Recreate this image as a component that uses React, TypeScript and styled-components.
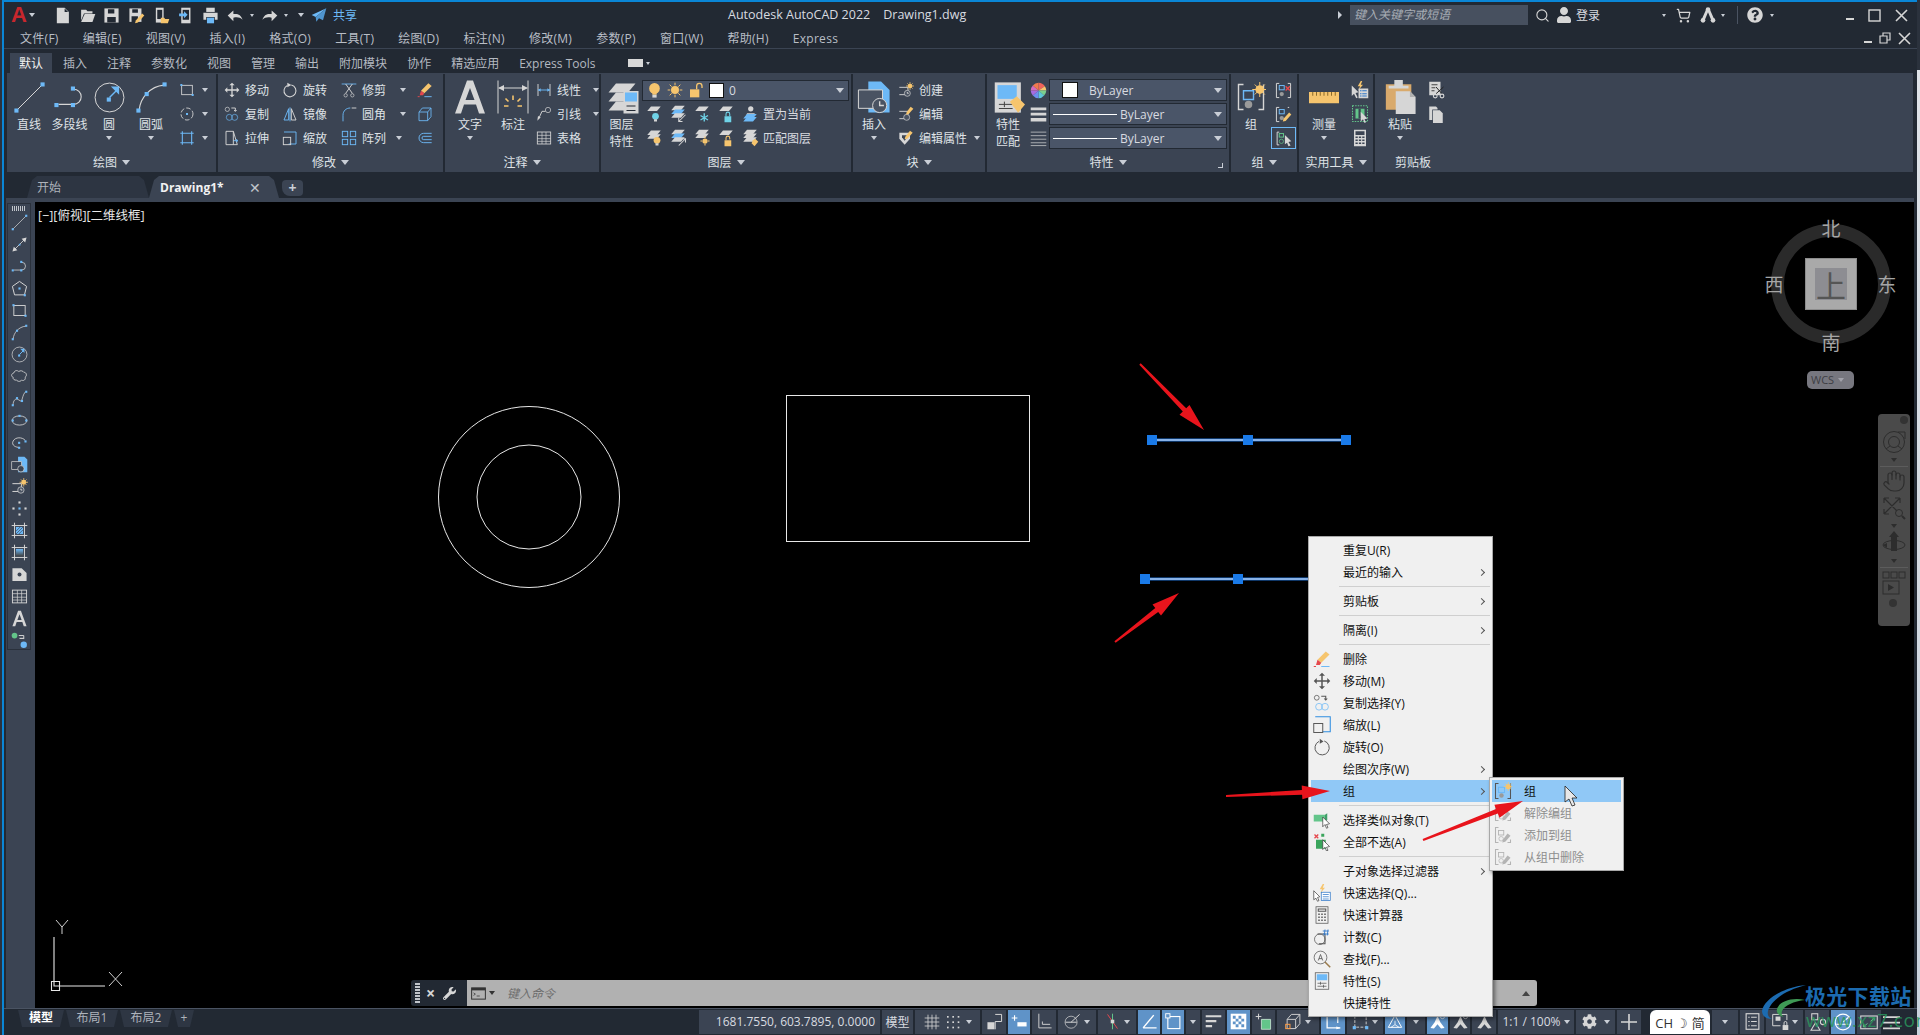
import React from 'react';
import styled, { createGlobalStyle } from 'styled-components';
import { FaCog, FaWrench, FaUser, FaQuestionCircle } from 'react-icons/fa';
import { Hand, Search, ShoppingCart } from 'lucide-react';

const FONT = `"Open Sans", "Noto Sans CJK SC", sans-serif`;
const DARK = '#222933';
const PANEL = '#3b4453';
const L = 'currentColor';
const B = '#6db9f7';
const Y = '#f6c56e';
const R = '#e5484d';
const GR = '#63c58a';

const P = ({ d, c = L, w = 1.4, f = 'none' }: { d: string; c?: string; w?: number; f?: string }) => (
  <path d={d} fill={f} stroke={c} strokeWidth={w} />
);
const F = ({ d, c = L }: { d: string; c?: string }) => <path d={d} fill={c} />;
const Q = ({ x, y, s = 3, c = B }: { x: number; y: number; s?: number; c?: string }) => (
  <rect x={x} y={y} width={s} height={s} fill={c} />
);
const Layer = ({ y = 0, c = L }: { y?: number; c?: string }) => <F c={c} d={`M8 ${3 + y}h13l-5 6H3z`} />;

const G: Record<string, React.ReactNode> = {
  new: <F d="M4 1h11l6 6v16H4zM15 2v5h5" />,
  open: <><F d="M3 4h7l2 2h7v3H7l-4 10z" /><F d="M8 10h15l-4 11H3z" /></>,
  save: <><F d="M2 2h20v20H2z" /><F c="#222933" d="M7 3h9v6H7zM6 14h12v8H6z" /></>,
  saveas: <><F d="M2 2h17v19H2z" /><F c="#222933" d="M6 3h8v5H6zM5 13h9v8H5z" /><F c={Y} d="M20 9l3 3-9 10-4 1 1-4z" /></>,
  phoneOpen: <><F d="M4 1h11v21H4z" /><F c="#222933" d="M6 4h7v13H6z" /><F c={Y} d="M11 15h5l1 2h6l-2 6H11z" /></>,
  phoneSave: <><F d="M6 1h13v22H6z" /><F c="#222933" d="M8 4h9v14H8z" /><F c={B} d="M3 9h7V6l5 5-5 5v-3H3z" /></>,
  print: <><F d="M6 1h12v6H6z" /><F d="M2 8h20v10h-4v-4H6v4H2z" /><F c={B} d="M7 15h10v8H7z" /></>,
  undo: <F d="M9 5v5c6-1 11 1 13 8-4-4-8-4-13-3v5L1 12z" />,
  redo: <F d="M15 5v5c-6-1-11 1-13 8 4-4 8-4 13-3v5l8-8z" />,
  share: <><F c={B} d="M23 2L1 12l6 3z" /><F c="#4f95cf" d="M23 2L7 15l1 7 4-5 6 3z" /></>,
  adsk: <><F d="M10 2h4l8 18h-5l-5-12-5 12H2z" /><circle cx="4.500" cy="20" r="3.500" fill={L} /><circle cx="19.500" cy="20" r="3.500" fill={L} /><circle cx="12" cy="4" r="3.500" fill={L} /></>,
  line: <><P d="M3 21L21 3" w={1} /><Q x={1} y={20} /><Q x={20} y={1} /></>,
  xline: <><P d="M3 21L21 3" w={1.2} /><F d="M2 22l2-7 5 5zM22 2l-2 7-5-5z" /><Q x={11} y={11} s={2.4} /></>,
  polyline: <><P d="M4 17H15M15 6a5.5 5.5 0 0 1 0 11" w={1.1} /><Q x={1} y={16} /><Q x={13} y={16} /><Q x={13} y={4} /></>,
  circle: <><circle cx="12" cy="12" r="10.5" fill="none" stroke={L} strokeWidth="1" /><Q x={10} y={12} /><P d="M12 12L18 6" c={B} /><F c={B} d="M19 4v6l-6-6z" /></>,
  arc: <><P d="M3 21C4 12 11 4 21 3" w={1.1} /><Q x={1} y={20} /><Q x={20} y={1} /><Q x={7} y={8} /></>,
  rect: <><rect x="4" y="5" width="16" height="14" fill="none" stroke={L} strokeWidth="1.3" /><Q x={2} y={3} /><Q x={19} y={18} /></>,
  ellipseDot: <><circle cx="12" cy="12" r="9" fill="none" stroke={L} strokeWidth="1.3" strokeDasharray="7 3" /><Q x={10.5} y={10.5} /></>,
  hatchBox: <P d="M2 5H22M2 19H22M5 2V22M19 2V22" c={B} w={1.6} />,
  move: <F d="M12 1l4 4h-3v6h6V8l4 4-4 4v-3h-6v6h3l-4 4-4-4h3v-6H5v3l-4-4 4-4v3h6V5H8z" />,
  rotate: <><P d="M14 4.5a9 9 0 1 1-6 .7" w={1.6} /><F d="M8 1l6 3.5-6 3.5z" /></>,
  trim: <><P d="M1 3H23" c={B} w={1.3} /><P d="M7 3l10 14M17 3L7 17" /><circle cx="7" cy="20" r="2.5" fill="none" stroke={L} /><circle cx="17" cy="20" r="2.5" fill="none" stroke={L} /></>,
  erase: <><F c={Y} d="M17 2l5 4-11 11-5-4z" /><F c={R} d="M6 13l5 4-2 3H4z" /><P d="M1 22h3" c={R} /><P d="M11 22h11" c={B} /></>,
  copy: <><circle cx="5" cy="5" r="3.2" fill="none" stroke={L} /><P d="M11 3h6v5M15 6l2 2 2-2" /><circle cx="8" cy="17" r="4.5" fill="none" stroke={B} /><circle cx="16" cy="17" r="4.5" fill="none" stroke={B} /></>,
  mirror: <><P d="M10 4L3 21h7zM12 2v21" c={B} /><P d="M14 4l7 17h-7z" /></>,
  fillet: <><P d="M3 23V14C3 7 8 3 14 3" c={B} w={1.4} /><P d="M16 3h7" /></>,
  cube: <P d="M3 9h13v13H3zM3 9l5-6h13v13l-5 6M16 9l5-6" c={B} w={1.3} />,
  stretch: <><P d="M3 2h11l6 20H3z" /><P d="M14 16h6M18 14l3 2-3 2" c={B} /><P d="M14 2v20" /></>,
  scale: <><P d="M3 3h18v18H10" c={B} /><rect x="2" y="11" width="11" height="11" fill="none" stroke={L} strokeWidth="1.4" /></>,
  array: <><rect x="2" y="2" width="8" height="8" fill="none" stroke={B} strokeWidth="1.4" /><rect x="14" y="2" width="8" height="8" fill="none" stroke={B} strokeWidth="1.4" /><rect x="2" y="14" width="8" height="8" fill="none" stroke={B} strokeWidth="1.4" /><rect x="14" y="14" width="8" height="8" fill="none" stroke={B} strokeWidth="1.4" /></>,
  offset: <><P d="M22 5H10a7 7 0 0 0 0 14h12" c={B} /><P d="M22 9.500H10a2.500 2.500 0 0 0 0 5h12" c={B} /></>,
  textA: <F d="M10 1h4l8 22h-4l-2-6H8l-2 6H2zM12 6l-3 8h6z" />,
  dim: <><P d="M2 1V23M22 1V23M3 6H21" w={1} /><F d="M2 6l4-2v4zM22 6l-4-2v4z" /><P d="M12 11v3M7 13l2 2M17 13l-2 2M6 18h3M15 18h3" c={Y} w={1.6} /></>,
  linear: <><P d="M3 3V21M21 3V21" /><P d="M3 12H21" c={B} /><F c={B} d="M3 12l4-2.500v5zM21 12l-4-2.500v5z" /></>,
  leader: <><circle cx="18" cy="6" r="4" fill="none" stroke={L} /><P d="M14 8H9L4 19" /><F d="M2 22l1-7 4 2z" /></>,
  table: <><rect x="2" y="3" width="20" height="18" fill="none" stroke={L} strokeWidth="1.3" /><P d="M2 8H22M2 13H22M2 17H22M9 3V21M15 3V21" w={1} /></>,
  layerProps: <><Layer /><Layer y={6} /><Layer y={12} /><F d="M13 8h10v15H13z" /><F c={B} d="M14 9h8v6h-8z" /><P d="M15 18h6M15 21h6" c="#222933" w={1} /></>,
  bulb: <><circle cx="12" cy="9" r="7.500" fill={Y} /><F c={Y} d="M9 15h6v3H9z" /><F d="M9 18h6v4H9z" /></>,
  sun: <><circle cx="12" cy="12" r="6" fill={Y} /><P d="M12 1v4M12 19v4M1 12h4M19 12h4M4 4l3 3M17 17l3 3M4 20l3-3M17 7l3-3" c={Y} w={1.5} /></>,
  lock: <><F c={Y} d="M3 11h14v12H3z" /><P d="M13 11V6a4 4 0 0 1 8 0v3" c={Y} w={2} /></>,
  layOff: <><Layer y={-1} /><circle cx="14" cy="15" r="4.500" fill="#6fd3e8" /><F d="M12 19h4v3h-4z" /></>,
  layWalk: <><Layer y={-2} /><Layer y={3} c={B} /><Layer y={8} /><P d="M22 13L13 22M13 17v5h5" /></>,
  layFrz: <><Layer y={-1} /><P d="M15 11v11M10 14l10 6M20 14l-10 6" c="#6fd3e8" w={1.8} /></>,
  layLock: <><Layer y={-1} /><F c="#6fd3e8" d="M10 15h9v8h-9z" /><P d="M12 15v-3a2.500 2.500 0 0 1 5 0v3" c="#6fd3e8" /></>,
  layCur: <><circle cx="13" cy="5" r="3.500" fill={L} /><F d="M8 11h10l1 3H7z" /><Layer y={9} c={B} /><Layer y={13} c={B} /></>,
  layBulb: <><Layer y={-1} /><Layer y={4} /><circle cx="16" cy="15" r="4.500" fill={Y} /><F d="M14 19h4v3h-4z" /></>,
  layUp: <><Layer y={-2} /><Layer y={3} c={B} /><Layer y={8} /><P d="M13 22L22 13M17 13h5v5" /></>,
  laySun: <><Layer y={-2} /><Layer y={3} /><circle cx="16" cy="16" r="3.500" fill={Y} /><P d="M16 10v2M16 20v2M10 16h2M20 16h2" c={Y} /></>,
  layLockY: <><Layer y={-1} /><F c={Y} d="M10 15h9v8h-9z" /><P d="M12 15v-3a2.500 2.500 0 0 1 5 0v2" c={Y} /></>,
  layMatch: <><Layer y={-2} /><Layer y={3} /><Layer y={8} /><F c={Y} d="M16 15l3-2 4 4-5 6-4-4z" /></>,
  insert: <><F c={B} d="M8 1h9l6 6v16H8z" /><rect x="1" y="7" width="17" height="13" fill="#4a5362" stroke={L} /><circle cx="16" cy="18" r="5" fill="#4a5362" stroke={L} /><P d="M16 15v3h3" /></>,
  create: <><P d="M2 8h13v11H2" /><circle cx="14" cy="17" r="4.500" fill="#4a5362" stroke={L} /><P d="M14 15v2h2" /><circle cx="18" cy="6" r="3.500" fill={Y} /><P d="M18 0v3M18 9v3M12 6h3M21 6h3M14 2l2 2M22 10l-2-2M14 10l2-2M22 2l-2 2" c={Y} w={1.1} /></>,
  blockEdit: <><P d="M2 8h13v11H2" /><circle cx="13" cy="17" r="4.500" fill="#4a5362" stroke={L} /><F c={Y} d="M19 1l4 3-7 8-4 1 1-4z" /></>,
  attr: <><F d="M2 4h16v9l-8 9-8-9z" /><F c="#3b4453" d="M6 8h8v3l-4 5-4-5z" /><F c={Y} d="M18 1l4 3-8 9-4 1 1-4z" /></>,
  match: <><F d="M2 1h19v22H2z" /><F c={B} d="M4 3h14v10H4z" /><P d="M5 17h10M5 20h10M9 15v4" c="#444" w={1} /><F c={Y} d="M13 15l5-4 6 6-5 6z" /></>,
  wheel: <><F c="#f0645a" d="M12 12V1a11 11 0 0 1 9 5z" /><F c="#f6c56e" d="M12 12l9-6a11 11 0 0 1 2 6z" /><F c="#7bd08f" d="M12 12h11a11 11 0 0 1-3 7z" /><F c="#5ec8d8" d="M12 12l8 7a11 11 0 0 1-8 4z" /><F c="#6d8ff0" d="M12 12v11a11 11 0 0 1-8-4z" /><F c="#a76de0" d="M12 12l-8 7a11 11 0 0 1-3-7z" /><F c="#d36dc0" d="M12 12H1a11 11 0 0 1 3-7z" /><F c="#f07a4f" d="M12 12L4 5a11 11 0 0 1 8-4z" /></>,
  lwt: <F d="M1 2h22v4H1zM1 9.500h22v4H1zM1 17h22v5H1z" />,
  ltype: <P d="M1 3h22M1 8h22M1 13h22M1 18h22M1 22h22" w={1} />,
  group: <><P d="M6 2H2v20h4M18 22h4V2" /><rect x="6" y="7" width="8" height="7" fill="none" stroke={B} strokeWidth="1.4" /><circle cx="10" cy="18" r="3" fill="#9a9a9a" /><circle cx="19" cy="6" r="3.500" fill={Y} /><P d="M19 0v3M19 9v3M13 6h3M22 6h2M15 2l2 2M23 10l-2-2M15 10l2-2M23 2l-2 2" c={Y} w={1} /></>,
  ungroup: <><P d="M6 2H2v20h4M18 2h4v20h-4" /><rect x="6" y="5" width="7" height="6" fill="none" stroke={B} strokeWidth="1.4" /><circle cx="9.500" cy="17" r="3" fill="#9a9a9a" /><P d="M15 6l6 6M21 6l-6 6" c={R} w={2} /></>,
  groupEdit: <><P d="M6 2H2v20h4M18 2h2" /><rect x="6" y="5" width="7" height="6" fill="none" stroke={B} strokeWidth="1.4" /><circle cx="9.500" cy="17" r="3" fill="#9a9a9a" /><F c={Y} d="M20 9l3 3-8 9-4 1 1-4z" /></>,
  groupSel: <><P d="M6 3H3v18h3" /><rect x="6" y="5" width="6" height="5" fill="none" stroke={GR} strokeWidth="1.4" /><circle cx="9" cy="16" r="3" fill="none" stroke={GR} /><F d="M14 7l9 9-4 1 3 5-3 1-2-5-3 2z" /></>,
  groupOff: <><P d="M6 2H2v20h4M18 22h4V18" /><rect x="6" y="6" width="7" height="6" fill="none" stroke={L} strokeWidth="1.2" /><circle cx="9.500" cy="17" r="3" fill="none" stroke={L} /><F d="M18 10l4 3-7 8-4 1 1-4z" /></>,
  ruler: <><F c={Y} d="M0 8h24v9H0z" /><P d="M3 8v3M6 8v3M9 8v3M12 8v3M15 8v3M18 8v3M21 8v3" c="#8a6a2a" w={1} /></>,
  quick: <><F c={Y} d="M13 0l-4 7h3l-2 5 6-7h-3l2-5z" /><F d="M1 6l9 9-4 1 3 6-2 1-3-6-3 3z" /><F d="M10 10h13v13H10z" /><P d="M12 13h2M15 13h6M12 17h2M15 17h6M12 20h2M15 20h6" c="#2f77c8" w={1.5} /></>,
  selAll: <><rect x="2" y="1" width="20" height="21" fill="none" stroke={GR} strokeDasharray="2 1.500" strokeWidth="1.4" /><F c={GR} d="M6 5h12v13H6z" /><F c="#3b4453" d="M10 5h3v10h6v3H10z" /><F d="M13 9l9 9-4 1 2 4-2 1-2-5-3 3z" /></>,
  calc: <><F d="M4 1h16v22H4z" /><F c="#3b4453" d="M6 3h12v5H6z" /><P d="M6 11h3M10.500 11h3M15 11h3M6 15h3M10.500 15h3M15 15h3M6 19h3M10.500 19h3M15 19h3" c="#3b4453" w={2} /></>,
  paste: <><F c="#d9aa6c" d="M2 3h18v18H2z" /><F d="M8 0h6v4h4v2H4V4h4z" /><F d="M9 8h10l4 4v12H9z" /><F c="#b0b0b0" d="M19 8v4h4z" /></>,
  cut: <><F d="M3 1h15v18H3z" /><P d="M6 5h8M6 9h5M6 13h4" c="#444" /><P d="M12 8l8 9M22 8l-10 9" c="#222" w={1.3} /><circle cx="11" cy="20" r="2.500" fill="none" stroke={L} strokeWidth="1.5" /><circle cx="20" cy="20" r="2.500" fill="none" stroke={L} strokeWidth="1.5" /></>,
  copyDoc: <><F d="M3 2h9l2 2v2H7v14H3z" /><F d="M8 7h9l4 4v13H8z" /></>,
  polygon: <><P d="M12 2l10 7-3 12H5L2 9z" /><Q x={10.500} y={10.500} /><Q x={18} y={20} /></>,
  cloud: <P d="M4 7c1-4 5-4 7-2 2-2 6-1 7 1 4 0 5 5 2 7 1 3-2 6-5 4-2 3-6 2-7 0-3 1-6-2-5-4-3-1-3-5 1-6z" w={1.2} />,
  spline: <><P d="M3 21c0-6 3-9 6-8s5 4 6 2 2-9 5-12" w={1.1} /><Q x={1} y={20} /><Q x={20} y={1} /><Q x={7} y={10} /><Q x={14} y={14} /></>,
  ellipse: <><ellipse cx="12" cy="12" rx="10.500" ry="6.500" fill="none" stroke={L} strokeWidth="1.2" /><Q x={10.500} y={4} /><Q x={1} y={10.500} /><Q x={20} y={10.500} /></>,
  ellipseArc: <><P d="M20 9C16 4 6 4 3 10s4 9 9 9" w={1.2} /><Q x={10} y={11} /><Q x={19} y={9} /><Q x={10} y={18} /></>,
  insertDoc: <><F c={B} d="M10 1h9l4 4v18H10z" /><rect x="1" y="8" width="14" height="11" fill="#3b4453" stroke={L} /><circle cx="14" cy="18" r="4.500" fill="#3b4453" stroke={L} /></>,
  point: <><Q x={10.500} y={2} c={L} /><Q x={2} y={10.500} c={L} /><Q x={19} y={10.500} c={L} /><Q x={10.500} y={19} c={L} /><Q x={10.500} y={10.500} c={B} /></>,
  hatch: <><P d="M1 5H23M1 19H23M5 1V23M19 1V23" /><F c={B} d="M7 7h10v10H7z" /><P d="M7 13l6-6M7 17l10-10M11 17l6-6" c="#3b4453" w={1} /></>,
  gradient: <><P d="M1 5H23M1 19H23M5 1V23M19 1V23" /><rect x="7" y="7" width="10" height="10" fill="url(#grad)" /><defs><linearGradient id="grad" x1="0" y1="0" x2="0" y2="1"><stop offset="0" stopColor={B} /><stop offset="1" stopColor="#444" /></linearGradient></defs></>,
  region: <><F d="M2 3h13l7 7v11H2z" /><circle cx="12" cy="12" r="2.800" fill="#3b4453" /></>,
  addSel: <><circle cx="5" cy="5" r="4" fill={GR} /><P d="M11 5h7v5" /><P d="M12 9h6" w={1.6} /><circle cx="18" cy="18" r="4.500" fill={B} /></>,
  simSel: <><F c={GR} d="M1 5h15v9H1z" /><F c="#3f9e68" d="M16 5l3-2v9l-3 2z" /><F c="#fff" d="M13 8l9 9-4 1 2 4-2 1-2-5-3 3z" /><P d="M13 8l9 9-4 1 2 4-2 1-2-5-3 3z" c="#333" w={.9} /></>,
  deselect: <><P d="M2 2l5 5M7 2l-5 5" c={R} w={1.8} /><F c="#3aa55c" d="M4 9h13v12H4z" /><Q x={11} y={1} s={4} c="#3aa55c" /><F c="#fff" d="M13 9l9 9-4 1 2 4-2 1-2-5-3 3z" /><P d="M13 9l9 9-4 1 2 4-2 1-2-5-3 3z" c="#333" w={.9} /></>,
  quickMenu: <><F c={Y} d="M13 0l-4 7h3l-2 5 6-7h-3l2-5z" /><F c="#fff" d="M1 9l8 8-3 1 2 4-2 1-2-4-3 2z" /><P d="M1 9l8 8-3 1 2 4-2 1-2-4-3 2z" c="#333" w={.9} /><rect x="11" y="11" width="12" height="11" fill="#fff" stroke="#2f77c8" /><P d="M13 14h8M13 17h8M13 20h8" c="#2f77c8" w={1} /></>,
  calcMenu: <><rect x="4" y="1" width="16" height="22" fill="none" stroke={L} /><P d="M7 4h10v3H7z" /><P d="M7 11h2M11 11h2M15 11h2M7 15h2M11 15h2M15 15h2M7 19h2M11 19h2M15 19h2" w={2} /></>,
  count: <><circle cx="9" cy="15" r="7" fill="none" stroke={L} /><P d="M6 8h10v13H8" /><P d="M16 2l-1 8M20 2l-1 8M13 4h8M13 8h8" c="#2f77c8" w={1.2} /></>,
  find: <><circle cx="10" cy="10" r="8.500" fill="none" stroke={L} /><P d="M7 14l3-8 3 8M8 11.500h4" w={1.1} /><P d="M16 16l7 7" c="#9a7a4a" w={2} /></>,
  propsMenu: <><rect x="3" y="1" width="18" height="22" fill="none" stroke={L} /><F c={B} d="M5 3h14v8H5z" /><P d="M6 15h12M6 19h12M10 13v4M14 17v4" w={1} /></>,
  scaleMenu: <><P d="M3 1h20v20H13" c="#2f8de0" /><rect x="1" y="10" width="12" height="12" fill="none" stroke={L} strokeWidth="1.3" /></>,
  rotateMenu: <><P d="M15 4a9.500 9.500 0 1 1-7 .5" w={1.3} /><F d="M9 1l5 3.500-5 3z" /></>,
  grid: <P d="M1 6H23M1 12H23M1 18H23M6 1V23M12 1V23M18 1V23" w={1.2} />,
  dots: <><Q x={3} y={3} s={2.500} c={L} /><Q x={11} y={3} s={2.500} c={L} /><Q x={19} y={3} s={2.500} c={L} /><Q x={3} y={11} s={2.500} c={L} /><Q x={11} y={11} s={2.500} c={L} /><Q x={19} y={11} s={2.500} c={L} /><Q x={3} y={19} s={2.500} c={L} /><Q x={11} y={19} s={2.500} c={L} /><Q x={19} y={19} s={2.500} c={L} /></>,
  snap: <><F d="M2 13h10v10H2z" /><P d="M13 2h9v10h-9v11" w={1.4} /></>,
  infer: <><P d="M1 7h8M5 3v8" c="#fff" w={1.6} /><F c="#fff" d="M9 13h13v6H9z" /></>,
  ortho: <P d="M4 1V21H22M9 12V16H20" w={1.3} />,
  polar: <><circle cx="10" cy="13" r="8.500" fill="none" stroke={L} /><P d="M10 13L22 2M2 13h16" /></>,
  osnap: <><P d="M5 2L19 22" c={R} w={1.4} /><P d="M12 1V23" c={GR} w={1.4} /><rect x="9.500" y="9.500" width="5" height="5" fill={L} /></>,
  angle: <P d="M3 21H22M3 21L18 3" c="#fff" w={2} />,
  rectIso: <><rect x="4" y="5" width="17" height="17" fill="none" stroke="#fff" strokeWidth="1.6" /><rect x="1" y="1" width="6" height="6" fill="#5f93c8" stroke="#fff" strokeWidth="1.3" /></>,
  lines: <F d="M1 3h22v3H1zM1 10h15v3H1zM1 17h9v3H1z" />,
  checker: <><F c="#fff" d="M1 1h22v22H1z" /><F c="#5f93c8" d="M4 4h4v4H4zM12 4h4v4h-4zM8 8h4v4H8zM16 8h4v4h-4zM4 12h4v4H4zM12 12h4v4h-4zM8 16h4v4H8zM16 16h4v4h-4z" /></>,
  selCycle: <><P d="M1 5h8M5 1v8" w={1.4} /><F c={GR} d="M9 9h13v14H9z" /><P d="M9 9h13v14H9z" c="#dff5e6" w={1} /></>,
  cube3d: <><P d="M3 9h12v13H3zM3 9l6-7h12v13l-6 7M15 9l6-7" w={1.3} /><rect x="1" y="16" width="6" height="6" fill="none" stroke="#f39a4a" strokeWidth="1.5" /></>,
  moveSt: <><P d="M3 2v19h18" c="#fff" w={1.8} /><P d="M8 4h10v10" c="#fff" w={1.8} /><F c="#fff" d="M16 19l7 2-7 2z" /></>,
  gizmo: <><rect x="4" y="4" width="16" height="16" fill="none" stroke={L} strokeDasharray="4 2" strokeWidth="1.3" /><Q x={1} y={1} s={4.500} /><Q x={18.500} y={1} s={4.500} /><Q x={1} y={18.500} s={4.500} /><Q x={18.500} y={18.500} s={4.500} /></>,
  gizmo3d: <><P d="M12 2L22 20H2z" c="#fff" w={1.5} /><P d="M12 10v6M6 20l6-4 6 4" c="#fff" w={1.2} /></>,
  annot: <><F d="M12 4l4 9 6 8-5 1-5-6-5 6-5-1 6-8z" /><circle cx="19" cy="5" r="3" fill="none" stroke={L} /></>,
  annotPlain: <F d="M12 4l4 9 6 8-5 1-5-6-5 6-5-1 6-8z" />,
  list: <><rect x="3" y="1" width="18" height="22" fill="none" stroke={L} strokeWidth="1.6" /><P d="M6 6h2M10 6h8M6 12h2M10 12h8M6 18h2M10 18h8" w={1.6} /></>,
  winLock: <><P d="M1 2h20v8" /><P d="M1 2v16h11" /><F d="M5 5h7v6H5z" /><F d="M15 17h8v7h-8z" /><P d="M17 17v-3a2 2 0 0 1 4 0v3" /></>,
  iso: <><rect x="5" y="1" width="8" height="8" fill="none" stroke={L} strokeWidth="1.4" /><circle cx="20" cy="12" r="3.500" fill="none" stroke={L} strokeWidth="1.4" /><P d="M10 13l6 10H4z" /></>,
  speed: <><circle cx="12" cy="12" r="10.500" fill="none" stroke="#fff" strokeWidth="1.6" /><P d="M12 12L19 6M3 15h18" c="#fff" w={1.4} /></>,
  full: <><rect x="1" y="4" width="22" height="17" fill="none" stroke={L} strokeWidth="1.5" /><P d="M14 11l5-4M16 6.500h3.500v3.500M10 14l-5 4M8 18.500H4.500V15" w={1.3} c={GR} /></>,
  burger: <F d="M0 3h24v2.500H0zM0 11h24v2.500H0zM0 19h24v2.500H0z" />,
  term: <><rect x="1" y="3" width="22" height="18" fill="none" stroke={L} strokeWidth="1.6" /><F d="M1 3h22v4H1z" /><P d="M4 11l3 2-3 2M9 16h5" w={1.2} /></>,
  navWheel: <><circle cx="12" cy="12" r="10.500" fill="none" stroke={L} strokeWidth="1" /><circle cx="12" cy="12" r="5.500" fill="none" stroke={L} strokeWidth="1" /><P d="M4 19l4-3M20 19l-4-3M16 2h7v7" w={1} /></>,
  navZoom: <><P d="M2 2l13 13M18 2L2 18M2 2v5M2 2h5M18 2v5M18 2h-5M2 18v-5M2 18h5" w={1.2} /><circle cx="17" cy="17" r="3.500" fill="none" stroke={L} /><P d="M20 20l3 3" w={2} /></>,
  navOrbit: <><F d="M9 6h6v14H9z" /><F d="M12 0l5 6H7z" /><ellipse cx="12" cy="14" rx="11" ry="4.500" fill="none" stroke={L} /><F d="M1 14l4-2v5z" /></>,
  navShow: <><rect x="1" y="1" width="6" height="6" fill="none" stroke={L} /><rect x="9" y="1" width="6" height="6" fill="none" stroke={L} /><rect x="17" y="1" width="6" height="6" fill="none" stroke={L} /><rect x="1" y="10" width="16" height="13" fill="none" stroke={L} /><F d="M6 13l6 3.500-6 3.500z" /></>,
};

const GlobalStyle = createGlobalStyle`
  html, body { margin: 0; padding: 0; overflow: hidden; background: #2b323d; }
  * { box-sizing: border-box; }
`;

const IcoSvg = styled.svg<{ $c?: string }>`
  display: block;
  flex: none;
  color: ${(p) => p.$c ?? '#d6d6d6'};
`;

const Ico = ({ n, s = 18, c }: { n: string; s?: number; c?: string }) => (
  <IcoSvg viewBox="0 0 24 24" width={s} height={s} $c={c}>
    {G[n]}
  </IcoSvg>
);

const Root = styled.div`
  position: relative;
  width: 1920px;
  height: 1035px;
  overflow: hidden;
  padding-left: 2px;
  background: #2b323d;
  font-family: ${FONT};
  font-size: 12px;
  color: #dfe2e6;
`;

const Win = styled.div`
  width: 1915px;
  height: 1035px;
  display: flex;
  flex-direction: column;
  background: ${DARK};
  border-top: 2px solid #0a86d6;
  border-left: 2px solid #0a86d6;
`;

const TitleBar = styled.div`
  height: 28px;
  flex: none;
  display: flex;
  align-items: center;
  position: relative;
  padding-bottom: 2px;
`;

const TitleLeft = styled.div`
  width: 724px;
  flex: none;
  display: flex;
  align-items: center;
  padding-left: 7px;
`;

const Logo = styled.span`
  font: 700 22px "Liberation Sans", sans-serif;
  color: #c8272d;
  width: 18px;
  line-height: 22px;
`;

const Qat = styled.div`
  display: flex;
  align-items: center;
  gap: 7.700px;
  margin-left: 19px;
`;

const Caret = styled.i<{ $ml?: number; $c?: string; $s?: number }>`
  display: inline-block;
  flex: none;
  width: 0;
  height: 0;
  margin-left: ${(p) => p.$ml ?? 0}px;
  border-left: ${(p) => p.$s ?? 3}px solid transparent;
  border-right: ${(p) => p.$s ?? 3}px solid transparent;
  border-top: ${(p) => (p.$s ?? 3) + 1}px solid ${(p) => p.$c ?? '#c9ced6'};
`;

const ShareText = styled.span`
  color: ${B};
  margin-left: -2px;
`;

const WinTitle = styled.span`
  color: #d8dbe0;
  font-size: 12.500px;
  white-space: pre;
  margin-top: -1px;
`;

const TitleRight = styled.div`
  position: absolute;
  left: 1334px;
  top: -1px;
  height: 28px;
  width: 580px;
  display: flex;
  align-items: center;
`;

const SideArrow = styled.i`
  width: 0;
  height: 0;
  border-top: 4px solid transparent;
  border-bottom: 4px solid transparent;
  border-left: 4px solid #c9ced6;
  margin-right: 8px;
`;

const SearchBox = styled.div`
  width: 178px;
  height: 20px;
  background: #47505f;
  color: #a8adb5;
  font-style: italic;
  padding-left: 4px;
  line-height: 20px;
  font-size: 12px;
`;

const Divider = styled.span`
  width: 1px;
  height: 18px;
  background: #4a5362;
  margin: 0 9px 0 12px;
`;

const WinBtns = styled.div<{ $ml?: number; $gap: number }>`
  margin-left: ${(p) => p.$ml ?? 0}px;
  display: flex;
  align-items: center;
  gap: ${(p) => p.$gap}px;
  flex: none;
`;

const WinMin = styled.span`
  width: 8px;
  height: 2px;
  background: #d6d6d6;
  margin-top: 8px;
`;

const MenuBar = styled.div`
  height: 19px;
  flex: none;
  display: flex;
  align-items: center;
  gap: 24px;
  padding: 0 0 2px 16px;
  color: #b9bec6;
  letter-spacing: 0.280px;
  border-bottom: 1px solid ${PANEL};
`;

const MenuRight = styled.div`
  margin-left: auto;
  padding-right: 6px;
`;

const RibbonTabs = styled.div`
  height: 24px;
  flex: none;
  display: flex;
  align-items: flex-end;
  gap: 2px;
  padding-left: 6px;
`;

const RTab = styled.div<{ $on?: boolean }>`
  height: 20px;
  line-height: 22px;
  padding: 0 9px;
  color: ${(p) => (p.$on ? '#f2f2f2' : '#b4b9c1')};
  background: ${(p) => (p.$on ? PANEL : 'transparent')};
`;

const TabWidget = styled.div`
  display: flex;
  align-items: center;
  height: 20px;
  margin-left: 22px;
  gap: 3px;
`;

const TabWidgetBox = styled.span`
  width: 15px;
  height: 8px;
  background: #d8d8d8;
`;

const Ribbon = styled.div`
  height: 99px;
  flex: none;
  width: 1906px;
  margin-left: 3px;
  background: ${PANEL};
  display: flex;
`;

const Panel = styled.section<{ $w?: number }>`
  position: relative;
  width: ${(p) => (p.$w ? `${p.$w}px` : 'auto')};
  flex: ${(p) => (p.$w ? 'none' : '1')};
  display: flex;
  flex-direction: column;
  border-right: ${(p) => (p.$w ? `2px solid ${DARK}` : 'none')};
  margin-top: 1px;
`;

const PanelBody = styled.div`
  height: 78px;
  padding-top: 4px;
  display: flex;
  align-items: flex-start;
`;

const PanelTitle = styled.div<{ $w?: number }>`
  height: 20px;
  width: ${(p) => (p.$w ? `${p.$w}px` : 'auto')};
  display: flex;
  align-items: center;
  justify-content: center;
  gap: 5px;
  color: #dfe2e6;
`;

const CornerArrow = styled.span`
  position: absolute;
  right: 6px;
  bottom: 4px;
  width: 5px;
  height: 5px;
  border-right: 1px solid #c9ced6;
  border-bottom: 1px solid #c9ced6;
`;

const BigTool = styled.div<{ $w: number }>`
  width: ${(p) => p.$w}px;
  flex: none;
  display: flex;
  flex-direction: column;
  align-items: center;
`;

const BigIcon = styled.div`
  height: 38px;
  display: flex;
  align-items: center;
  justify-content: center;

  svg * {
    vector-effect: non-scaling-stroke;
  }
`;

const BigLabel = styled.div`
  line-height: 17px;
  text-align: center;
  white-space: pre-line;
`;

const BigCaret = styled(Caret)`
  margin-top: 3px;
`;

const Big = ({ w, n, s = 32, label, caret }: { w: number; n: string; s?: number; label: string; caret?: boolean }) => (
  <BigTool $w={w}>
    <BigIcon>
      <Ico n={n} s={s} />
    </BigIcon>
    <BigLabel>{label}</BigLabel>
    {caret && <BigCaret />}
  </BigTool>
);

const Col = styled.div<{ $ml?: number; $w?: number }>`
  margin-left: ${(p) => p.$ml ?? 0}px;
  width: ${(p) => (p.$w ? `${p.$w}px` : 'auto')};
  flex: none;
  display: flex;
  flex-direction: column;
`;

const Row = styled.div<{ $gap?: number }>`
  height: 24px;
  display: flex;
  align-items: center;
  gap: ${(p) => p.$gap ?? 0}px;
  white-space: nowrap;
`;

const Slot = styled.span<{ $w: number; $box?: boolean }>`
  width: ${(p) => p.$w}px;
  height: 22px;
  flex: none;
  display: flex;
  align-items: center;
  justify-content: center;
  border: ${(p) => (p.$box ? `1px solid ${B}` : 'none')};
`;

const Tool = ({ n, label, w = 17, s = 16, gap = 5, caret }: { n: string; label?: string; w?: number; s?: number; gap?: number; caret?: number }) => (
  <Row $gap={gap}>
    <Slot $w={w}>
      <Ico n={n} s={s} />
    </Slot>
    {label && <span>{label}</span>}
    {caret !== undefined && <Caret $ml={caret} />}
  </Row>
);

const Combo = styled.div<{ $w: number; $h?: number }>`
  width: ${(p) => p.$w}px;
  height: ${(p) => p.$h ?? 22}px;
  background: #4a5568;
  border: 1px solid ${DARK};
  display: flex;
  align-items: center;
  position: relative;
  padding-right: 4px;
`;

const ComboCaret = styled(Caret)`
  margin-left: auto;
`;

const Swatch = styled.span<{ $size: number; $ml: number }>`
  width: ${(p) => p.$size}px;
  height: ${(p) => p.$size}px;
  background: #fff;
  border: 1px solid #111;
  margin-left: ${(p) => p.$ml}px;
  flex: none;
`;

const LineSample = styled.span`
  width: 64px;
  height: 1px;
  background: #fff;
  margin: 0 3px 0 3px;
  flex: none;
`;

const ComboText = styled.span<{ $ml?: number }>`
  margin-left: ${(p) => p.$ml ?? 0}px;
  color: #d8dbe0;
`;

const DocTabs = styled.div`
  height: 26px;
  flex: none;
  display: flex;
  align-items: flex-end;
  padding-left: 23px;
`;

const DocTab = styled.div<{ $w: number; $on?: boolean }>`
  width: ${(p) => p.$w}px;
  height: 22px;
  display: flex;
  align-items: center;
  padding-left: ${(p) => (p.$on ? 11 : 10)}px;
  background: ${(p) => (p.$on ? PANEL : '#2d3542')};
  clip-path: polygon(0 100%, 5px 4px, 10px 0, calc(100% - 10px) 0, calc(100% - 5px) 4px, 100% 100%);
  color: ${(p) => (p.$on ? '#f2f2f2' : '#aeb3bb')};
  font-weight: ${(p) => (p.$on ? 700 : 400)};
`;

const DocClose = styled.span`
  margin-left: 25px;
  font-weight: 400;
  font-size: 14px;
  color: #c0c4cb;
`;

const DocPlus = styled.div`
  width: 21px;
  height: 16px;
  margin: 0 0 2px 3px;
  background: ${PANEL};
  border-radius: 4px 4px 4px 8px;
  color: #c9ced6;
  font-size: 14px;
  font-weight: 700;
  line-height: 16px;
  text-align: center;
`;

const Strip = styled.div`
  height: 4px;
  flex: none;
  background: ${PANEL};
  margin-left: 2px;
  margin-right: 3px;
`;

const Main = styled.div`
  flex: 1;
  min-height: 0;
  display: flex;
`;

const Rail = styled.div`
  width: 31px;
  flex: none;
  background: ${PANEL};
  border-left: 2px solid ${DARK};
  padding: 1px 0 0 1px;
`;

const RailBox = styled.div`
  width: 24px;
  height: 447px;
  border: 1px solid #2a313c;
  display: flex;
  flex-direction: column;
  align-items: center;
`;

const GripH = styled.span`
  width: 14px;
  height: 5px;
  margin: 2px 0 0;
  flex: none;
  background: repeating-linear-gradient(90deg, #c0c4ca 0 1px, transparent 1px 2px);
`;

const RailBtn = styled.span`
  height: 22px;
  width: 22px;
  flex: none;
  display: flex;
  align-items: center;
  justify-content: center;
`;

const Canvas = styled.div`
  flex: 1;
  background: #000;
  position: relative;
`;

const DrawSvg = styled.svg`
  position: absolute;
  left: 0;
  top: 0;
`;

const ViewLabel = styled.div`
  position: absolute;
  left: 3px;
  top: 6px;
  color: #e8e8e8;
  font-size: 12.500px;
  line-height: 16px;
`;

const Ring = styled.div`
  position: absolute;
  left: 1736px;
  top: 22px;
  width: 120px;
  height: 120px;
  border-radius: 50%;
  border: 13px solid #2a2a2a;
`;

const CubeFace = styled.div`
  position: absolute;
  left: 1770px;
  top: 56px;
  width: 52px;
  height: 52px;
  background: #a9a9a9;
  border: 1px solid #8c8c8c;
  display: flex;
  align-items: center;
  justify-content: center;
`;

const CubeInner = styled.div`
  width: 32px;
  height: 32px;
  background: #8d8d92;
  color: #555;
  font: 400 30px/32px "Noto Sans CJK SC", sans-serif;
  text-align: center;
`;

const Compass = styled.span<{ $x: number; $y: number }>`
  position: absolute;
  left: ${(p) => p.$x - 10}px;
  top: ${(p) => p.$y - 12}px;
  width: 20px;
  font-size: 19px;
  line-height: 24px;
  text-align: center;
  color: #a6a6a6;
`;

const WcsPill = styled.div`
  position: absolute;
  left: 1772px;
  top: 169px;
  width: 47px;
  height: 18px;
  border-radius: 5px;
  background: #77777f;
  color: #3e3e44;
  font-size: 11px;
  line-height: 18px;
  display: flex;
  align-items: center;
  padding-left: 4px;
  gap: 4px;
`;

const NavBar = styled.div`
  position: absolute;
  left: 1843px;
  top: 212px;
  width: 32px;
  height: 212px;
  border-radius: 4px;
  background: #4a4a4a;
  display: flex;
  flex-direction: column;
  align-items: center;
  color: #2d2d2d;
  padding-top: 2px;
`;

const NavDot = styled.span`
  width: 8px;
  height: 8px;
  border-radius: 50%;
  background: #333;
  align-self: flex-end;
  margin-right: 2px;
  flex: none;
`;

const NavSlot = styled.span<{ $mt?: number }>`
  margin-top: ${(p) => p.$mt ?? 0}px;
  flex: none;
  display: flex;
`;

const NavRule = styled.span`
  width: 28px;
  height: 1px;
  background: #5c5c5c;
  margin-top: 4px;
  flex: none;
`;

const RightEdge = styled.div`
  width: 3px;
  flex: none;
  background: ${DARK};
`;

const CommandBar = styled.div`
  position: absolute;
  left: 376px;
  top: 778px;
  width: 1126px;
  height: 26px;
  display: flex;
`;

const CmdTools = styled.div`
  width: 56px;
  flex: none;
  background: ${DARK};
  display: flex;
  align-items: center;
  gap: 6px;
  padding-left: 4px;
  border-radius: 3px 0 0 3px;
`;

const GripV = styled.span`
  width: 5px;
  height: 20px;
  background: repeating-linear-gradient(180deg, #c0c4ca 0 2px, transparent 2px 3px);
`;

const CmdX = styled.span`
  color: #d6d6d6;
  font-size: 16px;
  font-weight: 700;
  width: 11px;
`;

const CmdField = styled.div`
  flex: 1;
  background: #b1b1b1;
  display: flex;
  align-items: center;
  padding: 0 4px;
  border-radius: 0 3px 3px 0;
  color: #6d6d6d;
  font-style: italic;
`;

const CmdText = styled.span`
  margin-left: 12px;
`;

const CmdUp = styled.i`
  margin-left: auto;
  margin-right: 3px;
  width: 0;
  height: 0;
  border-left: 4px solid transparent;
  border-right: 4px solid transparent;
  border-bottom: 5px solid #444;
`;

const StatusBar = styled.div`
  height: 27px;
  flex: none;
  display: flex;
  align-items: flex-start;
  gap: 2px;
  padding-top: 1px;
  border-top: 1px solid #4a5362;
`;

const LayoutTabs = styled.div`
  width: 693px;
  flex: none;
  display: flex;
  gap: 2px;
  padding-left: 14px;
`;

const LayoutTab = styled.div<{ $w: number; $on?: boolean }>`
  width: ${(p) => p.$w}px;
  height: 17px;
  line-height: 15px;
  text-align: center;
  background: #2e3643;
  clip-path: polygon(0 0, 100% 0, calc(100% - 4px) 100%, 4px 100%);
  color: ${(p) => (p.$on ? '#fff' : '#aeb3bb')};
  font-weight: ${(p) => (p.$on ? 700 : 400)};
`;

const StatusBox = styled.div<{ $w: number; $on?: boolean; $end?: boolean; $gap?: number; $ml?: number }>`
  width: ${(p) => p.$w}px;
  height: 24px;
  flex: none;
  margin-left: ${(p) => p.$ml ?? 0}px;
  display: flex;
  align-items: center;
  justify-content: ${(p) => (p.$end ? 'flex-end' : 'center')};
  gap: ${(p) => p.$gap ?? 3}px;
  padding: ${(p) => (p.$end ? '0 5px 1px 0' : '0 0 1px')};
  background: ${(p) => (p.$on ? '#5f93c8' : PANEL)};
  color: #d8dbe0;
`;

const ImeBox = styled.div`
  width: 60px;
  height: 24px;
  margin-left: 7px;
  flex: none;
  background: #fff;
  border-radius: 6px 6px 0 0;
  color: #333;
  font-size: 13px;
  line-height: 26px;
  text-align: center;
  white-space: nowrap;
`;

const BurgerWrap = styled.span`
  flex: none;
  height: 24px;
  display: flex;
  align-items: center;
`;

const MenuPanel = styled.div<{ $x: number; $y: number; $w: number }>`
  position: absolute;
  left: ${(p) => p.$x}px;
  top: ${(p) => p.$y}px;
  width: ${(p) => p.$w}px;
  background: #f0f0f0;
  border: 1px solid #a8a8a8;
  padding: 2px;
  color: #111;
  box-shadow: 2px 2px 4px rgba(0, 0, 0, 0.45);
`;

const MenuRow = styled.div<{ $hl?: boolean; $off?: boolean }>`
  height: 22px;
  display: flex;
  align-items: center;
  background: ${(p) => (p.$hl ? '#90c8f6' : 'transparent')};
  color: ${(p) => (p.$off ? '#8e8e8e' : '#111')};
  white-space: nowrap;
`;

const MenuIcon = styled.span`
  width: 32px;
  flex: none;
  padding-left: 2px;
  display: flex;
  align-items: center;
`;

const MenuChevron = styled.span`
  margin-left: auto;
  margin-right: 6px;
  width: 5px;
  height: 5px;
  border-top: 1px solid #555;
  border-right: 1px solid #555;
  transform: rotate(45deg);
`;

const MenuSep = styled.div`
  height: 7px;
  margin-left: 28px;
  display: flex;
  align-items: center;

  &::after {
    content: '';
    width: 100%;
    height: 1px;
    background: #cfcfcf;
  }
`;

const OverSvg = styled.svg`
  position: absolute;
  left: 0;
  top: 0;
  pointer-events: none;
`;

const Watermark = styled.div`
  position: absolute;
  left: 1805px;
  top: 984px;
  color: #1c6bb0;
  font-size: 21px;
  font-weight: 700;
  line-height: 25px;
  letter-spacing: 0.300px;
  white-space: nowrap;
`;

const WatermarkUrl = styled.div`
  position: absolute;
  left: 1806px;
  top: 1009px;
  color: rgba(42, 150, 92, 0.85);
  font-size: 19px;
  line-height: 22px;
  letter-spacing: 0.500px;
  white-space: nowrap;
`;

const EdgeSliver = styled.div`
  position: absolute;
  right: 0;
  top: 70px;
  width: 3px;
  height: 965px;
  background: linear-gradient(180deg, #dfe3e8, #c9d2dc);
`;

type MenuItem = { t?: string; i?: string; a?: boolean; hl?: boolean; sep?: boolean };

const MAIN_MENU: MenuItem[] = [
  { t: '重复U(R)' },
  { t: '最近的输入', a: true },
  { sep: true },
  { t: '剪贴板', a: true },
  { sep: true },
  { t: '隔离(I)', a: true },
  { sep: true },
  { t: '删除', i: 'erase' },
  { t: '移动(M)', i: 'move' },
  { t: '复制选择(Y)', i: 'copy' },
  { t: '缩放(L)', i: 'scaleMenu' },
  { t: '旋转(O)', i: 'rotateMenu' },
  { t: '绘图次序(W)', a: true },
  { t: '组', a: true, hl: true },
  { sep: true },
  { t: '选择类似对象(T)', i: 'simSel' },
  { t: '全部不选(A)', i: 'deselect' },
  { sep: true },
  { t: '子对象选择过滤器', a: true },
  { t: '快速选择(Q)...', i: 'quickMenu' },
  { t: '快速计算器', i: 'calcMenu' },
  { t: '计数(C)', i: 'count' },
  { t: '查找(F)...', i: 'find' },
  { t: '特性(S)', i: 'propsMenu' },
  { t: '快捷特性' },
];

const MENU_BAR = ['文件(F)', '编辑(E)', '视图(V)', '插入(I)', '格式(O)', '工具(T)', '绘图(D)', '标注(N)', '修改(M)', '参数(P)', '窗口(W)', '帮助(H)', 'Express'];
const RIBBON_TABS = ['默认', '插入', '注释', '参数化', '视图', '管理', '输出', '附加模块', '协作', '精选应用', 'Express Tools'];
const RAIL = ['line', 'xline', 'polyline', 'polygon', 'rect', 'arc', 'circle', 'cloud', 'spline', 'ellipse', 'ellipseArc', 'insertDoc', 'create', 'point', 'hatch', 'gradient', 'region', 'table', 'textA', 'addSel'];

// tail-thin red arrows drawn over the screenshot
const arrow = (x1: number, y1: number, x2: number, y2: number) => {
  const len = Math.hypot(x2 - x1, y2 - y1);
  const ux = (x2 - x1) / len;
  const uy = (y2 - y1) / len;
  const nx = -uy;
  const ny = ux;
  const hx = x2 - ux * 28;
  const hy = y2 - uy * 28;
  const pt = (x: number, y: number) => `${x.toFixed(1)},${y.toFixed(1)}`;
  return [
    pt(x1 + nx, y1 + ny),
    pt(hx + nx * 2.4, hy + ny * 2.4),
    pt(hx + nx * 7, hy + ny * 7),
    pt(x2, y2),
    pt(hx - nx * 7, hy - ny * 7),
    pt(hx - nx * 2.4, hy - ny * 2.4),
    pt(x1 - nx, y1 - ny),
  ].join(' ');
};

const Grip = ({ x, y }: { x: number; y: number }) => <rect x={x - 5} y={y - 5} width={10} height={10} fill="#1a7ae8" />;

const WinX = ({ s = 13 }: { s?: number }) => (
  <svg width={s} height={s} viewBox="0 0 13 13">
    <path d="M1 1l11 11M12 1L1 12" stroke="#d6d6d6" strokeWidth="1.6" />
  </svg>
);

const App = () => (
  <Root>
    <GlobalStyle />
    <Win>
      <TitleBar>
        <TitleLeft>
          <Logo>A</Logo>
          <Caret $ml={0} $s={3} />
          <Qat>
            <Ico n="new" s={17} />
            <Ico n="open" s={17} />
            <Ico n="save" s={17} />
            <Ico n="saveas" s={17} />
            <Ico n="phoneOpen" s={17} />
            <Ico n="phoneSave" s={17} />
            <Ico n="print" s={17} />
            <Ico n="undo" s={17} />
            <Caret $s={2} $ml={-2} />
            <Ico n="redo" s={17} />
            <Caret $s={2} $ml={-2} />
            <Caret $s={3} $ml={2} />
            <Ico n="share" s={16} />
            <ShareText>共享</ShareText>
          </Qat>
        </TitleLeft>
        <WinTitle>Autodesk AutoCAD 2022    Drawing1.dwg</WinTitle>
        <TitleRight>
          <SideArrow />
          <SearchBox>键入关键字或短语</SearchBox>
          <Slot $w={28}>
            <Search size={15} color="#d6d6d6" strokeWidth={1.8} />
          </Slot>
          <FaUser size={16} color="#d6d6d6" />
          <ComboText $ml={4}>登录</ComboText>
          <Caret $ml={62} $s={2} />
          <Slot $w={34}>
            <ShoppingCart size={15} color="#d6d6d6" />
          </Slot>
          <Ico n="adsk" s={16} />
          <Caret $ml={5} $s={2} />
          <Divider />
          <FaQuestionCircle size={16} color="#d6d6d6" />
          <Caret $ml={7} $s={2} />
          <WinBtns $ml={72} $gap={14}>
            <WinMin />
            <svg width="13" height="13" viewBox="0 0 13 13">
              <rect x="1" y="1" width="11" height="11" fill="none" stroke="#d6d6d6" strokeWidth="1.4" />
            </svg>
            <WinX />
          </WinBtns>
        </TitleRight>
      </TitleBar>

      <MenuBar>
        {MENU_BAR.map((m) => (
          <span key={m}>{m}</span>
        ))}
        <MenuRight>
          <WinBtns $gap={7}>
            <WinMin />
            <svg width="12" height="12" viewBox="0 0 12 12">
              <path d="M1 4h7v7H1zM4 4V1h7v7H8" fill="none" stroke="#d6d6d6" strokeWidth="1.2" />
            </svg>
            <WinX />
          </WinBtns>
        </MenuRight>
      </MenuBar>

      <RibbonTabs>
        {RIBBON_TABS.map((t, i) => (
          <RTab key={t} $on={i === 0}>
            {t}
          </RTab>
        ))}
        <TabWidget>
          <TabWidgetBox />
          <Caret $s={2} />
        </TabWidget>
      </RibbonTabs>

      <Ribbon>
        <Panel $w={211}>
          <PanelBody>
            <Big w={44} n="line" s={33} label="直线" />
            <Big w={37} n="polyline" s={33} label="多段线" />
            <Big w={42} n="circle" s={33} label="圆" caret />
            <Big w={42} n="arc" s={33} label="圆弧" caret />
            <Col $ml={3}>
              <Tool n="rect" w={24} gap={3} caret={0} />
              <Tool n="ellipseDot" w={24} gap={3} caret={0} />
              <Tool n="hatchBox" w={24} gap={3} caret={0} />
            </Col>
          </PanelBody>
          <PanelTitle>
            绘图 <Caret $s={4} />
          </PanelTitle>
        </Panel>

        <Panel $w={227}>
          <PanelBody>
            <Col $ml={5} $w={58}>
              <Tool n="move" label="移动" />
              <Tool n="copy" label="复制" />
              <Tool n="stretch" label="拉伸" />
            </Col>
            <Col $w={59}>
              <Tool n="rotate" label="旋转" />
              <Tool n="mirror" label="镜像" />
              <Tool n="scale" label="缩放" />
            </Col>
            <Col $w={76}>
              <Tool n="trim" label="修剪" caret={9} />
              <Tool n="fillet" label="圆角" caret={9} />
              <Tool n="array" label="阵列" caret={5} />
            </Col>
            <Col>
              <Tool n="erase" />
              <Tool n="cube" />
              <Tool n="offset" />
            </Col>
          </PanelBody>
          <PanelTitle>
            修改 <Caret $s={4} />
          </PanelTitle>
        </Panel>

        <Panel $w={156}>
          <PanelBody>
            <Big w={50} n="textA" s={36} label="文字" caret />
            <Big w={36} n="dim" s={36} label="标注" />
            <Col $ml={4}>
              <Tool n="linear" label="线性" caret={7} />
              <Tool n="leader" label="引线" caret={7} />
              <Tool n="table" label="表格" />
            </Col>
          </PanelBody>
          <PanelTitle>
            注释 <Caret $s={4} />
          </PanelTitle>
        </Panel>

        <Panel $w={252}>
          <PanelBody>
            <Big w={41} n="layerProps" s={36} label={'图层\n特性'} />
            <Col>
              <Row>
                <Combo $w={207} $h={21}>
                  <Slot $w={22}>
                    <Ico n="bulb" s={17} />
                  </Slot>
                  <Slot $w={20}>
                    <Ico n="sun" s={16} />
                  </Slot>
                  <Slot $w={22}>
                    <Ico n="lock" s={16} />
                  </Slot>
                  <Swatch $size={15} $ml={2} />
                  <ComboText $ml={5}>0</ComboText>
                  <ComboCaret $s={4} />
                </Combo>
              </Row>
              <Row>
                <Slot $w={24}><Ico n="layOff" s={18} /></Slot>
                <Slot $w={24}><Ico n="layWalk" s={18} /></Slot>
                <Slot $w={24}><Ico n="layFrz" s={18} /></Slot>
                <Slot $w={24}><Ico n="layLock" s={18} /></Slot>
                <Slot $w={24}><Ico n="layCur" s={18} /></Slot>
                <ComboText $ml={1}>置为当前</ComboText>
              </Row>
              <Row>
                <Slot $w={24}><Ico n="layBulb" s={18} /></Slot>
                <Slot $w={24}><Ico n="layUp" s={18} /></Slot>
                <Slot $w={24}><Ico n="laySun" s={18} /></Slot>
                <Slot $w={24}><Ico n="layLockY" s={18} /></Slot>
                <Slot $w={24}><Ico n="layMatch" s={18} /></Slot>
                <ComboText $ml={1}>匹配图层</ComboText>
              </Row>
            </Col>
          </PanelBody>
          <PanelTitle>
            图层 <Caret $s={4} />
          </PanelTitle>
        </Panel>

        <Panel $w={134}>
          <PanelBody>
            <Big w={42} n="insert" s={34} label="插入" caret />
            <Col>
              <Tool n="create" label="创建" w={22} gap={2} />
              <Tool n="blockEdit" label="编辑" w={22} gap={2} />
              <Tool n="attr" label="编辑属性" w={22} gap={2} caret={5} />
            </Col>
          </PanelBody>
          <PanelTitle>
            块 <Caret $s={4} />
          </PanelTitle>
        </Panel>

        <Panel $w={244}>
          <PanelBody>
            <Big w={42} n="match" s={33} label={'特性\n匹配'} />
            <Col>
              <Row $gap={2}>
                <Slot $w={18}><Ico n="wheel" s={17} /></Slot>
                <Combo $w={178}>
                  <Swatch $size={16} $ml={12} />
                  <ComboText $ml={11}>ByLayer</ComboText>
                  <ComboCaret $s={4} />
                </Combo>
              </Row>
              <Row $gap={2}>
                <Slot $w={18}><Ico n="lwt" s={17} /></Slot>
                <Combo $w={178}>
                  <LineSample />
                  <ComboText>ByLayer</ComboText>
                  <ComboCaret $s={4} />
                </Combo>
              </Row>
              <Row $gap={2}>
                <Slot $w={18}><Ico n="ltype" s={17} /></Slot>
                <Combo $w={178}>
                  <LineSample />
                  <ComboText>ByLayer</ComboText>
                  <ComboCaret $s={4} />
                </Combo>
              </Row>
            </Col>
          </PanelBody>
          <PanelTitle>
            特性 <Caret $s={4} />
          </PanelTitle>
          <CornerArrow />
        </Panel>

        <Panel $w={68}>
          <PanelBody>
            <Big w={40} n="group" s={30} label="组" />
            <Col>
              <Row><Slot $w={25}><Ico n="ungroup" s={17} /></Slot></Row>
              <Row><Slot $w={25}><Ico n="groupEdit" s={17} /></Slot></Row>
              <Row><Slot $w={25} $box><Ico n="groupSel" s={17} /></Slot></Row>
            </Col>
          </PanelBody>
          <PanelTitle>
            组 <Caret $s={4} />
          </PanelTitle>
        </Panel>

        <Panel $w={76}>
          <PanelBody>
            <Big w={50} n="ruler" s={30} label="测量" caret />
            <Col>
              <Row><Slot $w={22}><Ico n="quick" s={18} /></Slot></Row>
              <Row><Slot $w={22}><Ico n="selAll" s={18} /></Slot></Row>
              <Row><Slot $w={22}><Ico n="calc" s={18} /></Slot></Row>
            </Col>
          </PanelBody>
          <PanelTitle>
            实用工具 <Caret $s={4} />
          </PanelTitle>
        </Panel>

        <Panel>
          <PanelBody>
            <Big w={50} n="paste" s={34} label="粘贴" caret />
            <Col>
              <Row><Slot $w={22}><Ico n="cut" s={18} /></Slot></Row>
              <Row><Slot $w={22}><Ico n="copyDoc" s={18} /></Slot></Row>
            </Col>
          </PanelBody>
          <PanelTitle $w={76}>剪贴板</PanelTitle>
        </Panel>
      </Ribbon>

      <DocTabs>
        <DocTab $w={122}>开始</DocTab>
        <DocTab $w={130} $on>
          Drawing1*
          <DocClose>✕</DocClose>
        </DocTab>
        <DocPlus>+</DocPlus>
      </DocTabs>
      <Strip />

      <Main>
        <Rail>
          <RailBox>
            <GripH />
            {RAIL.map((n) => (
              <RailBtn key={n}>
                <Ico n={n} s={17} />
              </RailBtn>
            ))}
          </RailBox>
        </Rail>

        <Canvas>
          <DrawSvg width={1879} height={806} viewBox="35 202 1879 806">
            <g fill="none" stroke="#e8e8e8" strokeWidth="1">
              <circle cx="529" cy="497" r="90.500" />
              <circle cx="529" cy="497" r="52" />
              <rect x="786.500" y="395.500" width="243" height="146" />
              <path d="M54 937V986H105M51.500 981.500h8v9h-8z" strokeWidth="1.100" />
              <path d="M56 920l6 7 6-7M62 927v7M109 972l13 14M122 972l-13 14" strokeWidth=".9" />
            </g>
            <path d="M1152 440H1346M1145 579H1320" stroke="#1e6fd0" strokeWidth="3" />
            <path d="M1152 440H1346M1145 579H1320" stroke="#f2f6ff" strokeWidth="1" />
            <Grip x={1152} y={440} />
            <Grip x={1248} y={440} />
            <Grip x={1346} y={440} />
            <Grip x={1145} y={579} />
            <Grip x={1238} y={579} />
          </DrawSvg>

          <ViewLabel>[−][俯视][二维线框]</ViewLabel>

          <Ring />
          <CubeFace>
            <CubeInner>上</CubeInner>
          </CubeFace>
          <Compass $x={1796} $y={27}>北</Compass>
          <Compass $x={1796} $y={141}>南</Compass>
          <Compass $x={1739} $y={83}>西</Compass>
          <Compass $x={1852} $y={83}>东</Compass>
          <WcsPill>
            WCS <Caret $s={3} $c="#a2a2aa" />
          </WcsPill>

          <NavBar>
            <NavDot />
            <NavSlot $mt={6}><Ico n="navWheel" s={24} c="#2d2d2d" /></NavSlot>
            <NavSlot $mt={4}><Caret $c="#2d2d2d" /></NavSlot>
            <NavRule />
            <NavSlot $mt={2}><Hand size={24} color="#2d2d2d" strokeWidth={1.2} /></NavSlot>
            <NavSlot $mt={3}><Ico n="navZoom" s={24} c="#2d2d2d" /></NavSlot>
            <NavSlot $mt={4}><Caret $c="#2d2d2d" /></NavSlot>
            <NavSlot $mt={3}><Ico n="navOrbit" s={24} c="#2d2d2d" /></NavSlot>
            <NavSlot $mt={4}><Caret $c="#2d2d2d" /></NavSlot>
            <NavRule />
            <NavSlot $mt={3}><Ico n="navShow" s={24} c="#2d2d2d" /></NavSlot>
            <NavSlot $mt={4}><NavDot /></NavSlot>
          </NavBar>

          <CommandBar>
            <CmdTools>
              <GripV />
              <CmdX>×</CmdX>
              <FaWrench size={13} color="#d6d6d6" />
            </CmdTools>
            <CmdField>
              <Ico n="term" s={15} c="#333" />
              <Caret $ml={3} $c="#333" />
              <CmdText>键入命令</CmdText>
              <CmdUp />
            </CmdField>
          </CommandBar>
        </Canvas>
        <RightEdge />
      </Main>

      <StatusBar>
        <LayoutTabs>
          <LayoutTab $w={46} $on>模型</LayoutTab>
          <LayoutTab $w={52}>布局1</LayoutTab>
          <LayoutTab $w={52}>布局2</LayoutTab>
          <LayoutTab $w={20}>+</LayoutTab>
        </LayoutTabs>
        <StatusBox $w={181} $end>1681.7550, 603.7895, 0.0000</StatusBox>
        <StatusBox $w={31}>模型</StatusBox>
        <StatusBox $w={65} $gap={5}>
          <Ico n="grid" s={16} />
          <Ico n="dots" s={16} />
          <Caret />
        </StatusBox>
        <StatusBox $w={24}><Ico n="snap" s={17} /></StatusBox>
        <StatusBox $w={22} $on><Ico n="infer" s={17} c="#fff" /></StatusBox>
        <StatusBox $w={24}><Ico n="ortho" s={17} /></StatusBox>
        <StatusBox $w={38}><Ico n="polar" s={17} /><Caret /></StatusBox>
        <StatusBox $w={38}><Ico n="osnap" s={17} /><Caret /></StatusBox>
        <StatusBox $w={22} $on><Ico n="angle" s={17} /></StatusBox>
        <StatusBox $w={22} $on><Ico n="rectIso" s={17} /></StatusBox>
        <StatusBox $w={14}><Caret /></StatusBox>
        <StatusBox $w={23}><Ico n="lines" s={17} /></StatusBox>
        <StatusBox $w={23} $on><Ico n="checker" s={17} /></StatusBox>
        <StatusBox $w={23}><Ico n="selCycle" s={17} /></StatusBox>
        <StatusBox $w={42}><Ico n="cube3d" s={17} /><Caret /></StatusBox>
        <StatusBox $w={24} $on><Ico n="moveSt" s={17} /></StatusBox>
        <StatusBox $w={36}><Ico n="gizmo" s={17} /><Caret /></StatusBox>
        <StatusBox $w={20} $on><Ico n="gizmo3d" s={16} /></StatusBox>
        <StatusBox $w={18}><Caret /></StatusBox>
        <StatusBox $w={21} $on><Ico n="annot" s={17} c="#fff" /></StatusBox>
        <StatusBox $w={20}><Ico n="annot" s={17} /></StatusBox>
        <StatusBox $w={24}><Ico n="annotPlain" s={17} /></StatusBox>
        <StatusBox $w={76}>1:1 / 100%<Caret /></StatusBox>
        <StatusBox $w={39} $gap={7}><FaCog size={15} color="#d6d6d6" /><Caret /></StatusBox>
        <StatusBox $w={24}>
          <svg width="16" height="16" viewBox="0 0 16 16">
            <path d="M8 0v16M0 8h16" stroke="#d6d6d6" strokeWidth="1.600" />
          </svg>
        </StatusBox>
        <ImeBox>CH ☽ 简</ImeBox>
        <StatusBox $w={26}><Caret /></StatusBox>
        <StatusBox $w={24}><Ico n="list" s={17} /></StatusBox>
        <StatusBox $w={37}><Ico n="winLock" s={17} /><Caret /></StatusBox>
        <StatusBox $w={24}><Ico n="iso" s={18} /></StatusBox>
        <StatusBox $w={24} $on><Ico n="speed" s={18} /></StatusBox>
        <StatusBox $w={24}><Ico n="full" s={18} /></StatusBox>
        <BurgerWrap><Ico n="burger" s={17} /></BurgerWrap>
      </StatusBar>
    </Win>

    <EdgeSliver />

    <Watermark>极光下载站</Watermark>
    <WatermarkUrl>www.xz7.com</WatermarkUrl>
    <OverSvg width={1920} height={1035} viewBox="0 0 1920 1035">
      <path d="M1806 985c-22 2-42 14-44 26 0 5 4 8 10 8-3-1-5-4-4-8 3-11 18-21 38-26z" fill="#1c6bb0" />
      <path d="M1805 1000c-14-3-26 2-28 9-1 4 2 7 7 8-2-1-3-3-2-6 2-5 12-10 23-11z" fill="#3f9a55" />
    </OverSvg>

    <MenuPanel $x={1308} $y={536} $w={185}>
      {MAIN_MENU.map((m, i) =>
        m.sep ? (
          <MenuSep key={i} />
        ) : (
          <MenuRow key={i} $hl={m.hl}>
            <MenuIcon>{m.i && <Ico n={m.i} s={18} c="#555" />}</MenuIcon>
            {m.t}
            {m.a && <MenuChevron />}
          </MenuRow>
        )
      )}
    </MenuPanel>

    <MenuPanel $x={1489} $y={777} $w={135}>
      <MenuRow $hl>
        <MenuIcon><Ico n="group" s={18} c="#555" /></MenuIcon>组
      </MenuRow>
      <MenuRow $off>
        <MenuIcon><Ico n="groupOff" s={18} c="#b4b4b4" /></MenuIcon>解除编组
      </MenuRow>
      <MenuRow $off>
        <MenuIcon><Ico n="groupOff" s={18} c="#b4b4b4" /></MenuIcon>添加到组
      </MenuRow>
      <MenuRow $off>
        <MenuIcon><Ico n="groupOff" s={18} c="#b4b4b4" /></MenuIcon>从组中删除
      </MenuRow>
    </MenuPanel>

    <OverSvg width={1920} height={1035} viewBox="0 0 1920 1035">
      <path d="M1565 786v16l4-3 3 7 3-1-3-7 5 0z" fill="#e8e8e8" stroke="#222" strokeWidth=".8" />
      <g fill="#e8141c">
        <polygon points={arrow(1140, 364, 1204, 430)} />
        <polygon points={arrow(1115, 642, 1179, 593)} />
        <polygon points={arrow(1226, 796, 1330, 791)} />
        <polygon points={arrow(1423, 840, 1523, 801)} />
      </g>
    </OverSvg>
  </Root>
);

export default App;
